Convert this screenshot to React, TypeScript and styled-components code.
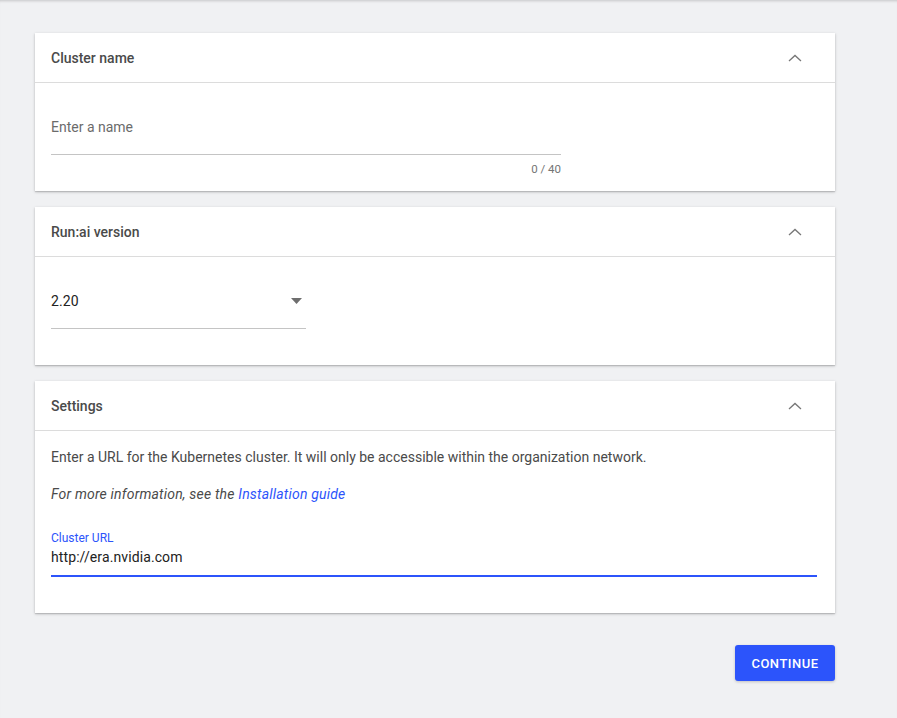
import React from "react";
import styled, { createGlobalStyle } from "styled-components";

const GlobalStyle = createGlobalStyle`
  html, body {
    margin: 0;
    padding: 0;
    background: #f0f1f3;
    font-family: Roboto, "Noto Sans", Arial, sans-serif;
    -webkit-font-smoothing: antialiased;
  }
  * { box-sizing: border-box; }
`;

const Page = styled.div`
  min-height: 718px;
  background: #f0f1f3;
  box-shadow: inset 0 3px 3px -2px rgba(0, 0, 0, 0.18);
  padding: 33px 0 36px 35px;
`;

const Column = styled.div`
  width: 800px;
  display: flex;
  flex-direction: column;
  gap: 16px;
`;

const Card = styled.section`
  background: #fff;
  box-shadow: 0 1px 3px rgba(0, 0, 0, 0.2), 0 1px 1px rgba(0, 0, 0, 0.12);
`;

const CardHeader = styled.div`
  height: 50px;
  display: flex;
  align-items: center;
  justify-content: space-between;
  padding: 0 28px 0 16px;
  border-bottom: 1px solid #dcdcdc;
`;

const CardTitle = styled.h2`
  margin: 0;
  font-size: 14px;
  font-weight: 500;
  color: #4a4a4a;
`;

const IconBox = styled.span`
  width: 24px;
  height: 24px;
  display: flex;
  align-items: center;
  justify-content: center;
`;

const CardBody = styled.div`
  padding: 16px;
`;

const Field = styled.div<{ $width: number }>`
  width: ${(p) => p.$width}px;
`;

const Control = styled.div`
  height: 56px;
  display: flex;
  align-items: center;
  border-bottom: 1px solid #c4c4c4;
`;

const StackedControl = styled.div`
  height: 56px;
  display: flex;
  flex-direction: column;
  gap: 2px;
  padding-top: 10px;
  border-bottom: 2px solid #2c54fb;
`;

const Placeholder = styled.span`
  font-size: 14px;
  color: #6b6b6b;
  line-height: 20px;
`;

const Value = styled.span`
  flex: 0 0 auto;
  font-size: 14px;
  letter-spacing: 0.1px;
  color: #222;
  line-height: 20px;
`;

const SelectValue = styled(Value)`
  flex: 1;
`;

const FloatLabel = styled.span`
  font-size: 12px;
  line-height: 14px;
  color: #2c54fb;
`;

const BottomSlot = styled.div`
  height: 20px;
  padding-top: 8px;
  display: flex;
  justify-content: flex-end;
  font-size: 11.5px;
  line-height: 12px;
  color: #757575;
`;

const Paragraph = styled.p<{ $italic?: boolean }>`
  margin: 0 0 17px;
  font-size: 14px;
  line-height: 20px;
  color: #4a4a4a;
  font-style: ${(p) => (p.$italic ? "italic" : "normal")};
  letter-spacing: ${(p) => (p.$italic ? "0.19px" : "normal")};
`;

const Link = styled.a`
  color: #2c54fb;
  text-decoration: none;
`;

const Actions = styled.div`
  display: flex;
  justify-content: flex-end;
  padding-top: 16px;
`;

const PrimaryButton = styled.button`
  width: 100px;
  height: 36px;
  border: none;
  border-radius: 3px;
  background: #2c54fb;
  color: #fff;
  font-family: Roboto, Arial, sans-serif;
  font-size: 13px;
  font-weight: 500;
  letter-spacing: 0.5px;
  box-shadow: 0 1px 3px rgba(0, 0, 0, 0.2);
  cursor: pointer;
`;

const ChevronUp = () => (
  <IconBox>
    <svg width="14" height="8" viewBox="0 0 14 8">
      <polyline points="1,7 7,1.5 13,7" fill="none" stroke="#777" strokeWidth="1.3" />
    </svg>
  </IconBox>
);

const DropArrow = () => (
  <svg width="11" height="6" viewBox="0 0 11 6" style={{ marginRight: 4 }}>
    <path d="M0 0 L11 0 L5.5 6 Z" fill="#6e6e6e" />
  </svg>
);

const Section: React.FC<{ title: string; children: React.ReactNode }> = ({ title, children }) => (
  <Card>
    <CardHeader>
      <CardTitle>{title}</CardTitle>
      <ChevronUp />
    </CardHeader>
    <CardBody>{children}</CardBody>
  </Card>
);

export default function App() {
  return (
    <>
      <GlobalStyle />
      <Page>
        <Column>
          <Section title="Cluster name">
            <Field $width={510}>
              <Control>
                <Placeholder>Enter a name</Placeholder>
              </Control>
              <BottomSlot>0 / 40</BottomSlot>
            </Field>
          </Section>
          <Section title="Run:ai version">
            <Field $width={255}>
              <Control>
                <SelectValue>2.20</SelectValue>
                <DropArrow />
              </Control>
              <BottomSlot />
            </Field>
          </Section>
          <Section title="Settings">
            <Paragraph>
              Enter a URL for the Kubernetes cluster. It will only be accessible within the organization network.
            </Paragraph>
            <Paragraph $italic>
              For more information, see the <Link href="#">Installation guide</Link>
            </Paragraph>
            <Field $width={766}>
              <StackedControl>
                <FloatLabel>Cluster URL</FloatLabel>
                <Value>http://era.nvidia.com</Value>
              </StackedControl>
              <BottomSlot />
            </Field>
          </Section>
          <Actions>
            <PrimaryButton>CONTINUE</PrimaryButton>
          </Actions>
        </Column>
      </Page>
    </>
  );
}
